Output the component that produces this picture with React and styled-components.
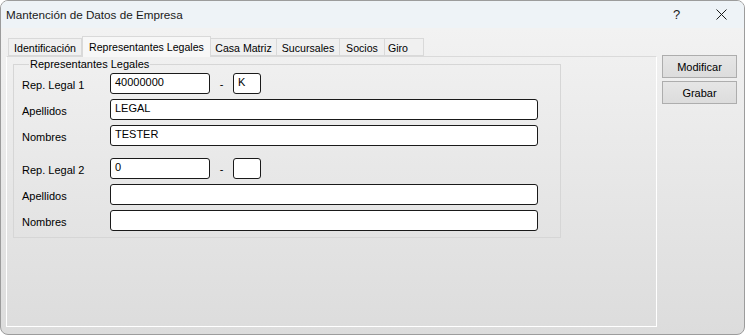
import React from 'react';
import styled, { createGlobalStyle } from 'styled-components';

const GlobalStyle = createGlobalStyle`
  html, body {
    margin: 0;
    padding: 0;
    background: #ffffff;
  }
  body {
    font-family: "Liberation Sans", Arial, sans-serif;
    font-size: 11px;
    color: #000;
  }
`;

const Window = styled.div`
  width: 743px;
  height: 333px;
  border: 1px solid #9c9c9c;
  border-radius: 8px;
  overflow: hidden;
  display: flex;
  flex-direction: column;
  background: linear-gradient(#f4f4f4, #dcdcdc);
`;

const TitleBar = styled.div`
  height: 27px;
  flex: none;
  display: flex;
  align-items: center;
  background: #eef3f7;
  padding-left: 5px;
`;

const Title = styled.div`
  flex: 1;
  font-size: 11.7px;
  color: #1a1a1a;
`;

const TitleButton = styled.div`
  width: 45px;
  height: 27px;
  display: flex;
  align-items: center;
  justify-content: center;
  font-size: 13px;
  color: #1a1a1a;
`;

const Body = styled.div`
  flex: 1;
  display: flex;
  padding: 7px 0 0 5px;
`;

const TabArea = styled.div`
  display: flex;
  flex-direction: column;
  width: 651px;
`;

const TabStrip = styled.div`
  display: flex;
  align-items: flex-end;
  height: 21px;
  padding-left: 2px;
  position: relative;
  z-index: 1;
`;

const Tab = styled.div`
  width: ${(p) => p.$w}px;
  height: ${(p) => (p.$active ? '21px' : '18px')};
  margin-bottom: ${(p) => (p.$active ? '-1px' : '0')};
  box-sizing: border-box;
  display: flex;
  align-items: center;
  justify-content: center;
  border: 1px solid #d9d9d9;
  border-bottom: ${(p) => (p.$active ? 'none' : '1px solid #d9d9d9')};
  border-left: ${(p) => (p.$first || p.$active ? '1px solid #d9d9d9' : 'none')};
  background: ${(p) => (p.$active ? '#f7f7f7' : '#f0f0f0')};
  font-size: 10.6px;
  padding-top: ${(p) => (p.$active ? '0' : '1px')};
  padding-right: ${(p) => p.$pr || 0}px;
`;

const Panel = styled.div`
  height: 271px;
  box-sizing: border-box;
  border: 1px solid #dadada;
  border-left-color: #ffffff;
  border-bottom-color: #ffffff;
  border-right-color: #ffffff;
  padding: 1px 6px 0 6px;
`;

const GroupBox = styled.fieldset`
  width: 548px;
  box-sizing: border-box;
  margin: 0;
  border: 1px solid #d6d6d6;
  padding: 2px 8px 6px 8px;
  display: flex;
  flex-direction: column;
  gap: 5px;
`;

const Legend = styled.legend`
  padding: 0 1px;
  margin-left: 7px;
  font-size: 11px;
  line-height: 13px;
`;

const Row = styled.div`
  display: flex;
  align-items: center;
  margin-top: ${(p) => (p.$spaced ? '7px' : '0')};
`;

const Label = styled.div`
  width: 88px;
  flex: none;
  font-size: 11px;
  padding-top: 2px;
`;

const Field = styled.div`
  width: ${(p) => p.$w}px;
  height: 21px;
  box-sizing: border-box;
  border: 1px solid #1a1a1a;
  border-radius: 3px;
  background: #ffffff;
  padding: 2px 4px 0;
  font-size: 11px;
  line-height: 13px;
  white-space: pre;
`;

const Dash = styled.div`
  width: 23px;
  text-align: center;
  font-size: 11px;
`;

const Side = styled.div`
  display: flex;
  flex-direction: column;
  gap: 3px;
  padding: 20px 0 0 5px;
`;

const Button = styled.div`
  width: 75px;
  height: 23px;
  box-sizing: border-box;
  border: 1px solid #adadad;
  background: linear-gradient(#e6e6e6, #dcdcdc);
  display: flex;
  align-items: center;
  justify-content: center;
  font-size: 11px;
`;

const tabs = [
  { label: 'Identificación', w: 74 },
  { label: 'Representantes Legales', w: 129 },
  { label: 'Casa Matriz', w: 66 },
  { label: 'Sucursales', w: 63 },
  { label: 'Socios', w: 45 },
  { label: 'Giro', w: 39, pr: 12 },
];

const RepBlock = ({ title, rut, dv, last, first, spaced }) => (
  <>
    <Row $spaced={spaced}>
      <Label>{title}</Label>
      <Field $w={100}>{rut}</Field>
      <Dash>-</Dash>
      <Field $w={28}>{dv}</Field>
    </Row>
    <Row>
      <Label>Apellidos</Label>
      <Field $w={428}>{last}</Field>
    </Row>
    <Row>
      <Label>Nombres</Label>
      <Field $w={428}>{first}</Field>
    </Row>
  </>
);

const App = () => (
  <>
    <GlobalStyle />
    <Window>
      <TitleBar>
        <Title>Mantención de Datos de Empresa</Title>
        <TitleButton>?</TitleButton>
        <TitleButton>
          <svg width="11" height="11" viewBox="0 0 11 11">
            <path d="M0.5 0.5 L10.5 10.5 M10.5 0.5 L0.5 10.5" stroke="#1a1a1a" strokeWidth="1" />
          </svg>
        </TitleButton>
      </TitleBar>
      <Body>
        <TabArea>
          <TabStrip>
            {tabs.map((t, i) => (
              <Tab key={t.label} $w={t.w} $pr={t.pr} $active={i === 1} $first={i === 0}>
                {t.label}
              </Tab>
            ))}
          </TabStrip>
          <Panel>
            <GroupBox>
              <Legend>Representantes Legales</Legend>
              <RepBlock title="Rep. Legal 1" rut="40000000" dv="K" last="LEGAL" first="TESTER" />
              <RepBlock title="Rep. Legal 2" rut="0" dv="" last="" first="" spaced />
            </GroupBox>
          </Panel>
        </TabArea>
        <Side>
          <Button>Modificar</Button>
          <Button>Grabar</Button>
        </Side>
      </Body>
    </Window>
  </>
);

export default App;
